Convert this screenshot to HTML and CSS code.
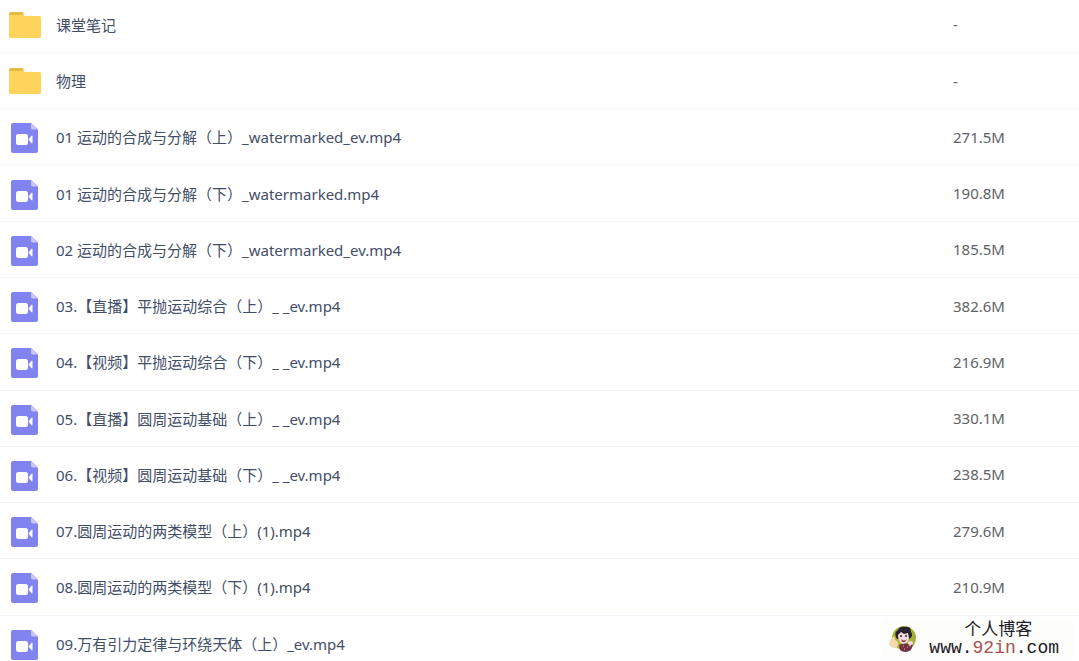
FILE: index.html
```html
<!DOCTYPE html>
<html lang="zh-CN">
<head>
<meta charset="UTF-8">
<title>物理</title>
<link rel="stylesheet" href="styles.css">
</head>
<body>

<!-- 图标 -->
<svg class="sprite" aria-hidden="true">
  <symbol id="folder" viewBox="0 0 32 30">
    <path d="M0 2.500Q0 1 1.500 1H13Q14.500 1 14.500 2.500V8H0z" fill="#e2bb45"/>
    <path d="M0 4H15L16 5H30.500Q32 5 32 6.500V25.500Q32 27 30.500 27H1.500Q0 27 0 25.500z" fill="#ffd45b"/>
  </symbol>
  <symbol id="video" viewBox="-2 0 32 30">
    <path d="M2 0H20L27 6.500V28Q27 30 25 30H2Q0 30 0 28V2Q0 0 2 0z" fill="#8183f1"/>
    <path d="M20 0L27 6.500H21.500Q20 6.500 20 5z" fill="#c5c6fa"/>
    <rect x="5" y="11" width="12" height="11" rx="2.500" fill="#fff"/>
    <path d="M17.500 16.500L20.500 12.800Q21.500 12 21.500 13.200V19.800Q21.500 21 20.500 20.200z" fill="#fff"/>
  </symbol>
</svg>

<!-- 文件列表 -->
<table class="file-list">
  <tr>
    <td class="name"><a href="#"><svg class="icon"><use href="#folder"/></svg>课堂笔记</a></td>
    <td class="size">-</td>
  </tr>
  <tr>
    <td class="name"><a href="#"><svg class="icon"><use href="#folder"/></svg>物理</a></td>
    <td class="size">-</td>
  </tr>
  <tr>
    <td class="name"><a href="#"><svg class="icon"><use href="#video"/></svg>01 运动的合成与分解（上）_watermarked_ev.mp4</a></td>
    <td class="size">271.5M</td>
  </tr>
  <tr>
    <td class="name"><a href="#"><svg class="icon"><use href="#video"/></svg>01 运动的合成与分解（下）_watermarked.mp4</a></td>
    <td class="size">190.8M</td>
  </tr>
  <tr>
    <td class="name"><a href="#"><svg class="icon"><use href="#video"/></svg>02 运动的合成与分解（下）_watermarked_ev.mp4</a></td>
    <td class="size">185.5M</td>
  </tr>
  <tr>
    <td class="name"><a href="#"><svg class="icon"><use href="#video"/></svg>03.【直播】平抛运动综合（上）_ _ev.mp4</a></td>
    <td class="size">382.6M</td>
  </tr>
  <tr>
    <td class="name"><a href="#"><svg class="icon"><use href="#video"/></svg>04.【视频】平抛运动综合（下）_ _ev.mp4</a></td>
    <td class="size">216.9M</td>
  </tr>
  <tr>
    <td class="name"><a href="#"><svg class="icon"><use href="#video"/></svg>05.【直播】圆周运动基础（上）_ _ev.mp4</a></td>
    <td class="size">330.1M</td>
  </tr>
  <tr>
    <td class="name"><a href="#"><svg class="icon"><use href="#video"/></svg>06.【视频】圆周运动基础（下）_ _ev.mp4</a></td>
    <td class="size">238.5M</td>
  </tr>
  <tr>
    <td class="name"><a href="#"><svg class="icon"><use href="#video"/></svg>07.圆周运动的两类模型（上）(1).mp4</a></td>
    <td class="size">279.6M</td>
  </tr>
  <tr>
    <td class="name"><a href="#"><svg class="icon"><use href="#video"/></svg>08.圆周运动的两类模型（下）(1).mp4</a></td>
    <td class="size">210.9M</td>
  </tr>
  <tr>
    <td class="name"><a href="#"><svg class="icon"><use href="#video"/></svg>09.万有引力定律与环绕天体（上）_ev.mp4</a></td>
    <td class="size"></td>
  </tr>
</table>

<!-- 右下角水印 -->
<div class="watermark">
  <svg class="avatar" viewBox="0 0 28 28" aria-hidden="true">
    <circle cx="15" cy="13" r="12" fill="#a3b234"/>
    <path d="M7 12Q5 7 9 5Q11 1 16 2Q22 1 22 7Q25 11 20 14L8 14z" fill="#272230"/>
    <path d="M9 10L12 7L15 9L19 8L20 13Q19 19 14 19Q9 17 9 10z" fill="#f5dce0"/>
    <path d="M11 11h2M16 11h2" stroke="#272230" stroke-width="1.500"/>
    <path d="M12 14Q15 17 18 14L16 17H13z" fill="#9c3545"/>
    <path d="M10 20Q16 17 24 20L22 25Q16 29 11 25z" fill="#74303f"/>
    <path d="M14 21h1M18 22h1M15 24h1M21 21h1" stroke="#e6a5aa"/>
    <path d="M3 13Q4 10 6 13V15Q10 16 9 20Q8 24 4 22Q0 21 1 17z" fill="#f4dcae" stroke="#dfbd83" stroke-width=".5"/>
    <path d="M19 17Q24 14 24 19L20 21z" fill="#f5dce0"/>
  </svg>
  <div class="site">
    <div class="site-name">个人博客</div>
    <div class="site-url">www.<span>92in</span>.com</div>
  </div>
</div>

</body>
</html>
```
FILE: styles.css
```css
body {
  margin: 0;
  height: 100vh;
  overflow: hidden;
  background-color: #fff;
  font-family: "Noto Sans", "Noto Sans CJK SC", sans-serif;
  font-size: 15px;
}

.sprite {
  display: none;
}

.file-list {
  width: 100%;
  height: calc(100vh + 14px);
  margin-top: -3px;
  border-collapse: collapse;
}

.file-list td {
  padding: 0;
  border-bottom: 1px solid #f2f5fc;
}

.name a {
  display: flex;
  align-items: center;
  gap: 15px;
  padding-left: 9px;
  color: #424e67;
  text-decoration: none;
}

.icon {
  width: 32px;
  height: 30px;
  margin-top: 3px;
}

.file-list .size {
  width: 126px;
  color: #606266;
}

/* 水印盖在列表上面 */
.watermark {
  position: absolute;
  right: 4px;
  bottom: 2px;
  display: flex;
  align-items: center;
  gap: 12px;
  padding: 0 16px 0 7px;
  background-color: #fdfdfc;
  color: #1c1a24;
}

.avatar {
  width: 28px;
  height: 28px;
}

.site {
  text-align: center;
}

.site-name {
  padding-left: 8px;
  font-family: "Noto Sans CJK SC", sans-serif;
  font-size: 17px;
  line-height: 18px;
}

.site-url {
  font-family: "Liberation Mono", monospace;
  font-size: 18px;
  line-height: 22px;
}

.site-url span {
  color: #a5524e;
}
```
